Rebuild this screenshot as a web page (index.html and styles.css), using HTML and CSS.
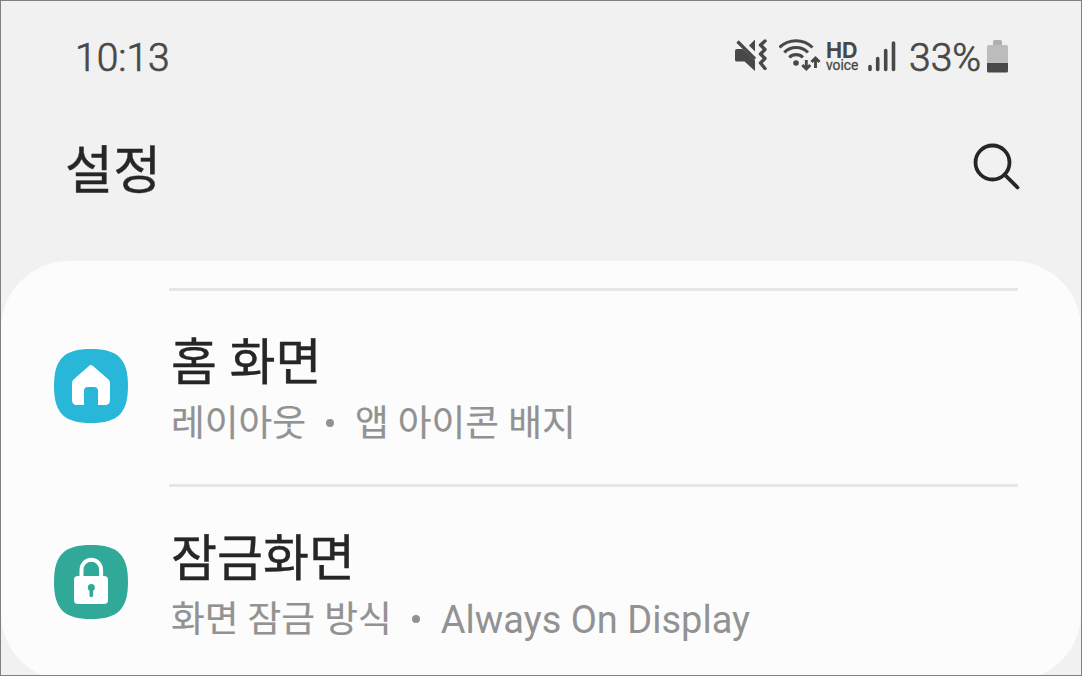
FILE: index.html
```html
<!DOCTYPE html>
<html lang="ko">
<head>
  <meta charset="UTF-8" />
  <meta name="viewport" content="width=device-width, initial-scale=1.0"/>
  <title>설정</title>
  <link rel="stylesheet" href="styles.css">
</head>
<body>

<div class="screen">

  <!-- Status bar -->
  <div class="status-bar">
    <span class="time">10:13</span>
    <div class="status-icons">
      <svg class="icon-mute" width="34" height="34" viewBox="0 0 34 34">
        <path d="M2 11h5.500l12.500 11.500V33l-10.500-9.500h-7.500Q0 23.500 0 22v-9Q0 11 2 11z" fill="#484848"/>
        <path d="M20 1.500v12L14 7.500z" fill="#484848"/>
        <path d="M2.500 3.500l17.500 17.500" stroke="#484848" stroke-width="3.200"/>
        <path d="M30 3l-4.500 4 4.500 4.500-4.500 4.500 4.500 4.500-4.500 4.500 4.500 5.500" fill="none" stroke="#484848" stroke-width="3.400" stroke-linecap="round" stroke-linejoin="round"/>
      </svg>
      <svg class="icon-wifi" width="42" height="34" viewBox="0 0 42 34">
        <g fill="none" stroke="#484848" stroke-width="3.100">
          <path d="M0.500 9.500a23.500 23.500 0 0 1 33 0"/>
          <path d="M5.300 14.500a16.500 16.500 0 0 1 23.600 0"/>
          <path d="M10.300 19.500a9.500 9.500 0 0 1 13.600 0"/>
        </g>
        <circle cx="17" cy="25" r="2.800" fill="#484848"/>
        <path d="M27.300 22v9M23.300 27l4 4 4-4M36.500 30v-10M32.500 24l4-4 4 4" fill="none" stroke="#484848" stroke-width="2.900"/>
      </svg>
      <div class="hd-voice">
        <span class="hd">HD</span>
        <span class="voice">voice</span>
      </div>
      <svg class="icon-signal" width="28" height="32" viewBox="0 0 28 32">
        <path d="M2 26.500v3M9.700 18.500v11M17.700 10.500v19M25.500 3v26.500" stroke="#484848" stroke-width="3.600" stroke-linecap="round"/>
      </svg>
      <span class="percent">33%</span>
      <svg class="icon-battery" width="22" height="33" viewBox="0 0 22 33">
        <path d="M6 5V1.500Q6 0 7.500 0h6Q15 0 15 1.500V5z" fill="#b0b0b0"/>
        <path d="M0 7Q0 5 2 5h17q2 0 2 2v16H0z" fill="#bcbcbc"/>
        <path d="M0 23h21v8q0 1.500-1.500 1.500h-18Q0 32.500 0 31z" fill="#484848"/>
      </svg>
    </div>
  </div>

  <!-- Header -->
  <header class="header">
    <h1>설정</h1>
    <svg class="icon-search" width="50" height="50" viewBox="0 0 50 50">
      <circle cx="21.500" cy="21.500" r="17" fill="none" stroke="#262626" stroke-width="3.800"/>
      <path d="M33.500 33.500l13 13" stroke="#262626" stroke-width="3.800" stroke-linecap="round"/>
    </svg>
  </header>

  <!-- Settings list -->
  <section class="card">
    <div class="divider"></div>
    <div class="item">
      <svg class="item-icon" width="74" height="74" viewBox="0 0 74 74">
        <path d="M37 0C64 0 74 10 74 37S64 74 37 74 0 64 0 37 10 0 37 0z" fill="#29b7d9"/>
        <path d="M35 17q2-2 4 0l15.500 13.500q1.500 1.500 1.500 4V51q0 5-5 5h-7V42q0-4-4-4h-6q-4 0-4 4v14h-7q-5 0-5-5V34.500q0-2.500 1.500-4z" fill="#fff"/>
      </svg>
      <div class="item-text">
        <h2>홈 화면</h2>
        <p><span>레이아웃</span><i class="dot"></i><span>앱 아이콘 배지</span></p>
      </div>
    </div>
    <div class="divider"></div>
    <div class="item">
      <svg class="item-icon" width="74" height="74" viewBox="0 0 74 74">
        <path d="M37 0C64 0 74 10 74 37S64 74 37 74 0 64 0 37 10 0 37 0z" fill="#30a999"/>
        <path d="M27.500 33v-8a9.800 10.300 0 0 1 19.600 0v8" fill="none" stroke="#fff" stroke-width="4"/>
        <rect x="20" y="31" width="34" height="28" rx="4" fill="#fff"/>
        <circle cx="37.300" cy="42.500" r="3.500" fill="#30a999"/>
        <path d="M37.300 43v7.500" stroke="#30a999" stroke-width="3.600" stroke-linecap="round"/>
      </svg>
      <div class="item-text">
        <h2>잠금화면</h2>
        <p><span>화면 잠금 방식</span><i class="dot"></i><span class="latin">Always On Display</span></p>
      </div>
    </div>
  </section>

</div>

</body>
</html>
```
FILE: styles.css
```css
* { box-sizing: border-box; }
body { margin: 0; font-family: Roboto, "Noto Sans CJK KR", sans-serif; color: #262626; }
h1, h2, p { margin: 0; font-weight: 400; white-space: nowrap; }
h1, h2 { -webkit-text-stroke: 0.4px #262626; }
svg { display: block; flex-shrink: 0; }

.screen { width: 1082px; height: 676px; overflow: hidden; background: #f1f1f1; border: 1px solid #808080; }

/* Status bar */
.status-bar { display: flex; justify-content: space-between; height: 112px; padding: 34px 72px 0 74px; color: #484848; }
.time, .percent { font-size: 39px; line-height: 46px; font-weight: 300; -webkit-text-stroke: 0.7px #484848; }
.status-icons { display: flex; align-items: flex-start; }
.icon-mute { margin: 3px 10px 0 0; }
.icon-wifi { margin: 3px 5px 0 0; }
.hd-voice { width: 34px; margin: 7px 8px 0 0; }
.hd, .voice { display: block; }
.hd { font-family: Inter, sans-serif; font-size: 21.500px; line-height: 16px; font-weight: 700; }
.voice { font-size: 13.800px; line-height: 15px; font-weight: 400; -webkit-text-stroke: 0.3px #484848; }
.icon-signal { margin: 5px 13px 0 0; }
.percent { width: 74px; }
.icon-battery { margin: 5px 0 0 4px; }

/* Header */
.header { display: flex; justify-content: space-between; height: 148px; padding: 22px 60px 0 64px; }
h1 { font-size: 52px; line-height: 74px; letter-spacing: 0.5px; }
.icon-search { margin-top: 6px; }

/* Settings list */
.card { height: 420px; padding: 27px 63px 0 53px; background: #fcfcfc; border-radius: 68px; }
.divider { height: 3px; margin-left: 115px; background: #e6e6e6; }
.item { display: flex; height: 193px; padding-top: 58px; }
.item-icon { margin-right: 43px; }
.item-text { margin-top: -22px; }
h2 { font-size: 50px; line-height: 72px; }
p { display: flex; align-items: center; font-size: 36.700px; line-height: 50px; color: #929292; -webkit-text-stroke: 0.2px #929292; }
.latin { font-size: 38px; line-height: 48px; -webkit-text-stroke: 0; }
.dot { width: 8px; height: 8px; margin: -3px 21px 0 20px; border-radius: 50%; background: #929292; }
```
